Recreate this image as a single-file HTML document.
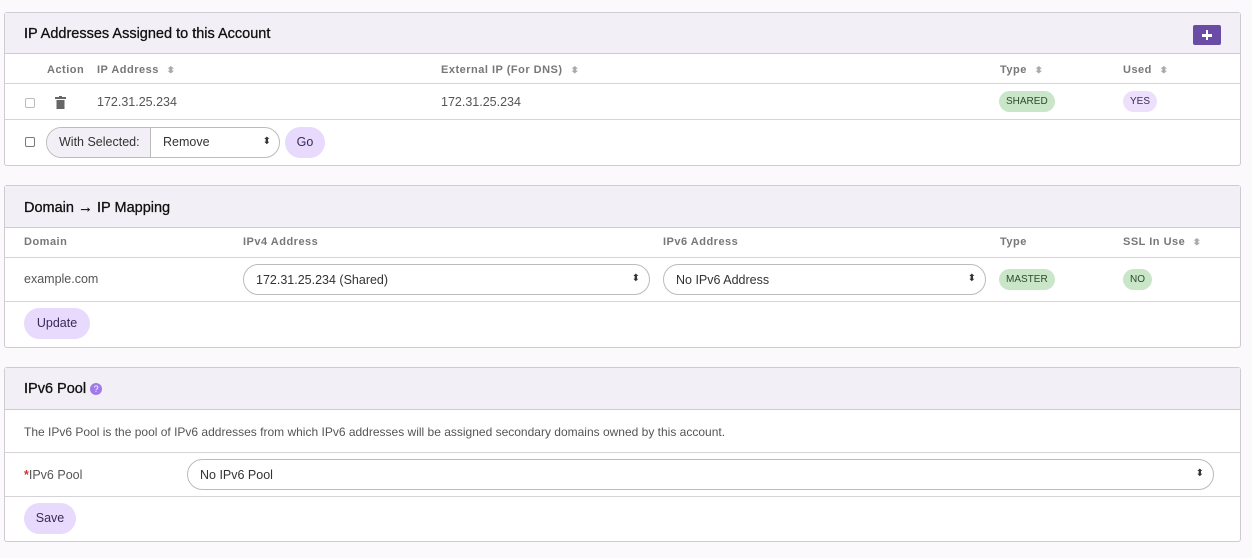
<!DOCTYPE html><html><head><style>
*{box-sizing:border-box;margin:0;padding:0}
body{width:1252px;height:558px;background:#fcf9fc;font-family:"Liberation Sans",sans-serif;position:relative;overflow:hidden;color:#555}
.p{position:absolute;left:4px;width:1237px;border:1px solid #cfcbd2;border-radius:3px;background:#fff}
.h{position:absolute;left:0;right:0;top:0;background:#f3eff6;border-bottom:1px solid #cfcbd2}
.t{position:absolute;left:19px;font-size:14.5px;color:#111;-webkit-text-stroke:0.3px #111}
.line{position:absolute;left:0;right:0;border-top:1px solid #d6d3d8}
.a{position:absolute;font-size:12.5px;white-space:nowrap}
.ch{font-size:11px;font-weight:bold;color:#777;letter-spacing:.5px}
.s{display:inline-block;margin-left:8px;color:#aaa;font-size:9px;transform:scaleX(1.2)}
.cb{position:absolute;width:10px;height:10px;border:1px solid #999;border-radius:2px;background:#fff}
.badge{position:absolute;border-radius:11px;font-size:10px;height:21px;padding:0 7px;display:flex;align-items:center;justify-content:center}
.g{background:#c9e6c9;color:#2e4a2e}.v{background:#ece0fc;color:#3a2a5a}
.sel{position:absolute;border:1px solid #bbb;border-radius:16px;height:31px;font-size:12.5px;color:#333;padding:8px 12px;background:#fff}
.sel:after{content:"⬍";position:absolute;right:9px;top:8px;font-size:10px;color:#333}
.btn{position:absolute;background:#e8dafc;border-radius:16px;color:#3a2a5a;font-size:12.5px;text-align:center;line-height:31px;height:31px}
</style></head><body>

<div class="p" style="top:12px;height:154px">
 <div class="h" style="height:41px"><div class="t" style="top:13px">IP Addresses Assigned to this Account</div>
 <div style="position:absolute;left:1188px;top:12px;width:28px;height:20px;background:#6a4ba6;border-radius:2px"><div style="position:absolute;left:9px;top:9px;width:10px;height:2.5px;background:#fff"></div><div style="position:absolute;left:12.75px;top:5px;width:2.5px;height:10px;background:#fff"></div></div></div>
 <div class="a ch" style="left:42px;top:51px">Action</div>
 <div class="a ch" style="left:92px;top:51px">IP Address<span class="s">⬍</span></div>
 <div class="a ch" style="left:436px;top:51px">External IP (For DNS)<span class="s">⬍</span></div>
 <div class="a ch" style="left:995px;top:51px">Type<span class="s">⬍</span></div>
 <div class="a ch" style="left:1118px;top:51px">Used<span class="s">⬍</span></div>
 <div class="line" style="top:70px"></div>
 <div class="cb" style="left:20px;top:85px;border-color:#bbb"></div>
 <svg style="position:absolute;left:50px;top:83px" width="11" height="13"><rect x="0" y="1" width="11" height="2" fill="#666"/><rect x="4" y="0" width="3" height="2" fill="#666"/><rect x="1.5" y="4" width="8" height="9" fill="#666"/></svg>
 <div class="a" style="left:92px;top:82px">172.31.25.234</div>
 <div class="a" style="left:436px;top:82px">172.31.25.234</div>
 <div class="badge g" style="left:994px;top:78px">SHARED</div>
 <div class="badge v" style="left:1118px;top:78px">YES</div>
 <div class="line" style="top:106px"></div>
 <div class="cb" style="left:20px;top:124px;border-color:#777"></div>
 <div style="position:absolute;left:41px;top:114px;width:234px;height:31px;border:1px solid #bbb;border-radius:16px;overflow:hidden;font-size:12.5px;color:#333">
  <div style="position:absolute;left:0;top:0;width:104px;height:29px;background:#f3eff6;border-right:1px solid #bbb;padding:7px 0 0 12px">With Selected:</div>
  <div style="position:absolute;left:116px;top:7px">Remove</div><div style="position:absolute;right:8px;top:8px;font-size:10px">⬍</div></div>
 <div class="btn" style="left:280px;top:114px;width:40px">Go</div>
</div>

<div class="p" style="top:185px;height:163px">
 <div class="h" style="height:42px"><div class="t" style="top:13px">Domain <b style="font-size:15px">→</b> IP Mapping</div></div>
 <div class="a ch" style="left:19px;top:50px">Domain</div>
 <div class="a ch" style="left:238px;top:50px">IPv4 Address</div>
 <div class="a ch" style="left:658px;top:50px">IPv6 Address</div>
 <div class="a ch" style="left:995px;top:50px">Type</div>
 <div class="a ch" style="left:1118px;top:50px">SSL In Use<span class="s">⬍</span></div>
 <div class="line" style="top:71px"></div>
 <div class="a" style="left:19px;top:86px">example.com</div>
 <div class="sel" style="left:238px;top:78px;width:407px">172.31.25.234 (Shared)</div>
 <div class="sel" style="left:658px;top:78px;width:323px">No IPv6 Address</div>
 <div class="badge g" style="left:994px;top:83px">MASTER</div>
 <div class="badge g" style="left:1118px;top:83px">NO</div>
 <div class="line" style="top:115px"></div>
 <div class="btn" style="left:19px;top:122px;width:66px">Update</div>
</div>

<div class="p" style="top:367px;height:175px">
 <div class="h" style="height:42px"><div class="t" style="top:13px">IPv6 Pool <span style="display:inline-block;width:12px;height:12px;border-radius:50%;background:#a07ae8;color:#fff;font-size:9px;text-align:center;line-height:12px;vertical-align:1px;-webkit-text-stroke:0">?</span></div></div>
 <div class="a" style="left:19px;top:57px;font-size:12px">The IPv6 Pool is the pool of IPv6 addresses from which IPv6 addresses will be assigned secondary domains owned by this account.</div>
 <div class="line" style="top:84px"></div>
 <div class="a" style="left:19px;top:100px"><span style="color:#c33;font-weight:bold">*</span>IPv6 Pool</div>
 <div class="sel" style="left:182px;top:91px;width:1027px">No IPv6 Pool</div>
 <div class="line" style="top:128px"></div>
 <div class="btn" style="left:19px;top:135px;width:52px">Save</div>
</div>
</body></html>
